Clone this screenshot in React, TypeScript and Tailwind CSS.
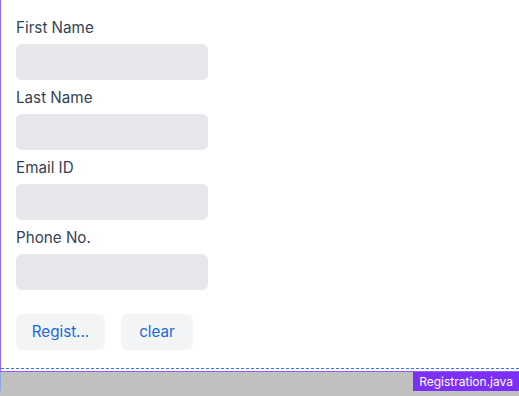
import * as React from 'react';

const fields = ['First Name', 'Last Name', 'Email ID', 'Phone No.'];

function Field({ label }: { label: string }) {
  return (
    <div className="flex flex-col">
      <label className="mb-1 h-6 text-[15.2px] leading-6 text-gray-700">{label}</label>
      <input className="h-9 w-[192px] rounded-md bg-gray-200 px-3 outline-none" />
    </div>
  );
}

export default function App() {
  return (
    <div
      className="flex h-screen w-full flex-col overflow-hidden bg-[#c0c0c0]"
      style={{ fontFamily: 'Inter, "Noto Sans", sans-serif' }}
    >
      {/* Preview area */}
      <div className="h-[372px] shrink-0 border-b border-l border-b-[#8b5cf6] border-l-[#8b6cf6] bg-white">
        <div className="flex h-[369px] flex-col border-b border-dashed border-b-[#3b6cf6] pl-[15px] pt-4">
          <div className="flex flex-col gap-1.5">
            {fields.map((f) => (
              <Field key={f} label={f} />
            ))}
          </div>
          <div className="mt-6 flex gap-4">
            <button className="h-9 w-[89px] rounded-md bg-gray-100 text-[15.2px] text-[#1769dc]">
              Regist...
            </button>
            <button className="h-9 w-[72px] rounded-md bg-gray-100 text-[15.2px] text-[#1769dc]">
              clear
            </button>
          </div>
        </div>
      </div>

      {/* Footer */}
      <div className="flex border-l border-l-[#8aa8e0]">
        <div className="ml-auto h-[19px] bg-[#7b2ff7] px-1.5 text-[12px] leading-[19px] text-white">
          Registration.java
        </div>
      </div>
    </div>
  );
}
